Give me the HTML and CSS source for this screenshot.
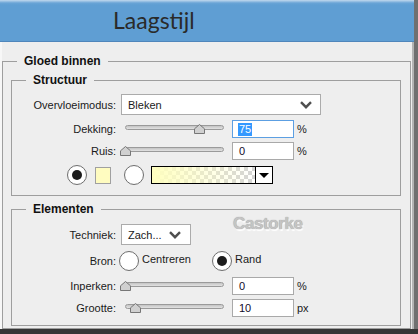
FILE: index.html
```html
<!DOCTYPE html>
<html lang="nl">
<head>
    <meta charset="UTF-8" />
    <meta name="viewport" content="width=device-width, initial-scale=1.0" />
    <title>Laagstijl</title>
    <link rel="stylesheet" href="styles.css">
</head>
<body>
    <div class="window">
        <div class="titlebar">
            <span class="title">Laagstijl</span>
        </div>

        <div class="content">
            <fieldset class="group outer">
                <legend>Gloed binnen</legend>

                <fieldset class="group structuur">
                    <legend>Structuur</legend>

                    <div class="row row-select">
                        <span class="lbl">Overvloeimodus:</span>
                        <div class="select select-wide">
                            <span>Bleken</span>
                            <svg class="chevron" width="12" height="8" viewBox="0 0 12 8"><path d="M1 1.2 L6 6.2 L11 1.2" /></svg>
                        </div>
                    </div>

                    <div class="row row-dekking">
                        <span class="lbl">Dekking:</span>
                        <div class="slider">
                            <div class="track"></div>
                            <svg class="thumb" style="left: 75%" width="11" height="10" viewBox="0 0 11 10"><path d="M5.5 0.5 L10.5 4.8 L10.5 9.5 L0.5 9.5 L0.5 4.8 Z" /></svg>
                        </div>
                        <div class="field focus"><span class="picked">75</span></div>
                        <span class="unit">%</span>
                    </div>

                    <div class="row row-ruis">
                        <span class="lbl">Ruis:</span>
                        <div class="slider">
                            <div class="track"></div>
                            <svg class="thumb" style="left: 0%" width="11" height="10" viewBox="0 0 11 10"><path d="M5.5 0.5 L10.5 4.8 L10.5 9.5 L0.5 9.5 L0.5 4.8 Z" /></svg>
                        </div>
                        <div class="field">0</div>
                        <span class="unit">%</span>
                    </div>

                    <div class="row row-colors">
                        <span class="radio checked"></span>
                        <span class="swatch"></span>
                        <span class="radio"></span>
                        <div class="gradient-picker">
                            <div class="gradient"></div>
                            <div class="gradient-btn"><span class="arrow"></span></div>
                        </div>
                    </div>
                </fieldset>

                <fieldset class="group elementen">
                    <legend>Elementen</legend>

                    <div class="row row-techniek">
                        <span class="lbl">Techniek:</span>
                        <div class="select select-small">
                            <span>Zach...</span>
                            <svg class="chevron" width="12" height="8" viewBox="0 0 12 8"><path d="M1 1.2 L6 6.2 L11 1.2" /></svg>
                        </div>
                        <span class="watermark">Castorke</span>
                    </div>

                    <div class="row row-bron">
                        <span class="lbl">Bron:</span>
                        <div class="option first">
                            <span class="radio"></span>
                            <span class="option-text">Centreren</span>
                        </div>
                        <div class="option">
                            <span class="radio checked"></span>
                            <span class="option-text">Rand</span>
                        </div>
                    </div>

                    <div class="row row-inperken">
                        <span class="lbl">Inperken:</span>
                        <div class="slider">
                            <div class="track"></div>
                            <svg class="thumb" style="left: 0%" width="11" height="10" viewBox="0 0 11 10"><path d="M5.5 0.5 L10.5 4.8 L10.5 9.5 L0.5 9.5 L0.5 4.8 Z" /></svg>
                        </div>
                        <div class="field">0</div>
                        <span class="unit">%</span>
                    </div>

                    <div class="row row-grootte">
                        <span class="lbl">Grootte:</span>
                        <div class="slider">
                            <div class="track"></div>
                            <svg class="thumb" style="left: 10.5%" width="11" height="10" viewBox="0 0 11 10"><path d="M5.5 0.5 L10.5 4.8 L10.5 9.5 L0.5 9.5 L0.5 4.8 Z" /></svg>
                        </div>
                        <div class="field">10</div>
                        <span class="unit">px</span>
                    </div>
                </fieldset>
            </fieldset>
        </div>
    </div>
</body>
</html>
```

FILE: styles.css
```css
html, body {
    margin: 0;
    padding: 0;
    background-color: #363636;
}

body {
    width: 418px;
    height: 334px;
    overflow: hidden;
    font-family: 'Liberation Sans', Arial, sans-serif;
    font-size: 11px;
    color: #1a1a1a;
}

.window {
    width: 414px;
    height: 329px;
    border-right: 4px solid #707070;
    display: flex;
    flex-direction: column;
}

.titlebar {
    height: 34px;
    padding: 7px 0 0 113px;
    border-bottom: 1px solid #4f86bb;
    background: linear-gradient(#c2d9ee 0, #6aa4d6 3px, #5f9ed3 5px);
}

    .titlebar .title {
        font-family: Lato, 'Open Sans', sans-serif;
        font-size: 23px;
        line-height: 27px;
        color: #2a2a2a;
    }

.content {
    flex: 1;
    overflow: hidden;
    background-color: #eeeeee;
    border-left: 2px solid #f7f7f7;
    border-right: 2px solid #b4b4b4;
    padding-top: 12px;
}

.group {
    margin: 0;
    padding: 0;
    min-inline-size: 0;
    border: 1px solid #9e9e9e;
}

    .group legend {
        margin-left: 14px;
        padding: 0 7px;
        font-size: 12px;
        font-weight: bold;
        line-height: 14px;
        color: #111;
    }

.outer {
    margin-right: 1px;
    padding-bottom: 2px;
}

.structuur {
    margin: 5px 9px 0 8px;
    padding: 7px 0 11px 0;
}

.elementen {
    margin: 6px 9px 0 8px;
    padding: 8px 0 8px 0;
}

.row {
    display: flex;
    align-items: center;
    gap: 5px;
    height: 18px;
}

.row-select,
.row-techniek {
    height: 21px;
}

.row-dekking { margin-top: 5px; }
.row-ruis { margin-top: 4px; }
.row-colors { margin-top: 6px; padding-left: 55px; gap: 0; }
.row-bron { margin-top: 6px; height: 20px; }
.row-inperken { margin-top: 6px; }
.row-grootte { margin-top: 4px; }

.row-techniek {
    position: relative;
}

.lbl {
    width: 104px;
    flex: none;
    text-align: right;
}

.select {
    box-sizing: border-box;
    height: 21px;
    display: flex;
    align-items: center;
    justify-content: space-between;
    padding: 0 8px 0 6px;
    background-color: #ffffff;
    border: 1px solid #ababab;
}

.select-wide { width: 200px; }
.select-small { width: 70px; padding-right: 9px; }

.chevron path {
    fill: none;
    stroke: #4f4f4f;
    stroke-width: 2.4;
}

.slider {
    position: relative;
    width: 99px;
    height: 18px;
    margin: 0 3px 0 4px;
    flex: none;
}

    .slider .track {
        margin-top: 5px;
        height: 3px;
        border: 1px solid #9a9a9a;
        border-radius: 3px;
        background: linear-gradient(#c4c4c4, #e2e2e2);
    }

    .slider .thumb {
        position: absolute;
        top: 4px;
        margin-left: -5.5px;
    }

        .slider .thumb path {
            fill: #d0d0d0;
            stroke: #767676;
            stroke-width: 1;
        }

.field {
    box-sizing: border-box;
    width: 62px;
    height: 18px;
    padding-left: 6px;
    line-height: 16px;
    background-color: #ffffff;
    border: 1px solid #a9a9a9;
    color: #120a2a;
}

    .field.focus {
        border-color: #5c9fe2;
    }

    .field .picked {
        display: inline-block;
        line-height: 13px;
        padding: 0 1px;
        margin-left: -1px;
        background-color: #3399ff;
        color: #ffffff;
    }

.unit {
    margin-left: -2px;
}

.radio {
    box-sizing: border-box;
    width: 20px;
    height: 20px;
    flex: none;
    border: 1px solid #6f6f6f;
    border-radius: 50%;
    background: radial-gradient(circle, #ffffff 60%, #f0f0f0);
    display: flex;
    align-items: center;
    justify-content: center;
}

    .radio.checked::after {
        content: "";
        width: 10px;
        height: 10px;
        border-radius: 50%;
        background-color: #1c1c1c;
    }

.swatch {
    box-sizing: border-box;
    width: 16px;
    height: 17px;
    margin: 0 13px 0 8px;
    border: 1px solid #a0a0a0;
    background-color: #fffcc0;
}

.gradient-picker {
    box-sizing: border-box;
    width: 122px;
    height: 18px;
    margin-left: 7px;
    display: flex;
    border: 1px solid #000000;
}

    .gradient-picker .gradient {
        flex: 1;
        background-color: #ffffff;
        background-image:
            linear-gradient(to right, #ffffc0, rgba(255, 255, 192, 0)),
            linear-gradient(45deg, #d4d4d4 25%, transparent 25%, transparent 75%, #d4d4d4 75%),
            linear-gradient(45deg, #d4d4d4 25%, transparent 25%, transparent 75%, #d4d4d4 75%);
        background-size: 100% 100%, 8px 8px, 8px 8px;
        background-position: 0 0, 0 0, 4px 4px;
    }

    .gradient-picker .gradient-btn {
        width: 16px;
        border-left: 1px solid #000000;
        background-color: #ffffff;
        display: flex;
        align-items: center;
        justify-content: center;
    }

        .gradient-btn .arrow {
            width: 0;
            height: 0;
            border-left: 5px solid transparent;
            border-right: 5px solid transparent;
            border-top: 5px solid #000000;
        }

.option {
    display: flex;
    align-items: center;
    gap: 3px;
}

    .option.first {
        width: 93px;
        margin-left: -2px;
    }

    .option + .option {
        margin-left: -5px;
    }

    .option-text {
        margin-top: -4px;
    }

.watermark {
    position: absolute;
    left: 221px;
    top: -8px;
    font-size: 17px;
    font-weight: bold;
    line-height: 16px;
    letter-spacing: -0.4px;
    color: #c4c4c4;
    text-shadow: 0 0 1px #8c8c8c, 1px 2px 1px #ffffff;
}
```
